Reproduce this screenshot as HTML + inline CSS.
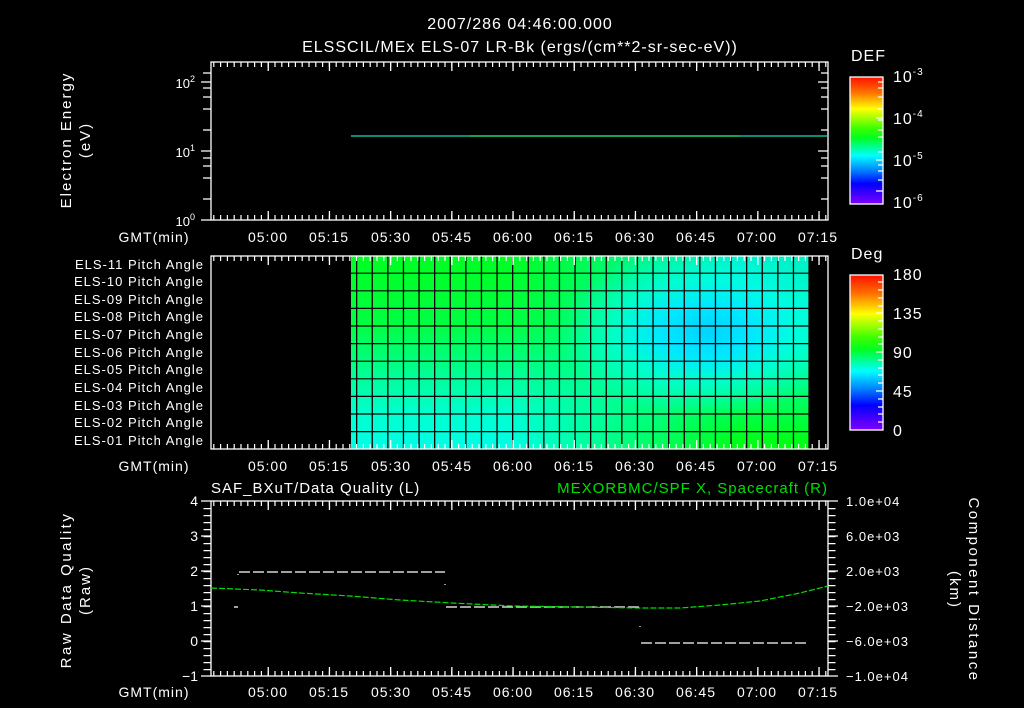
<!DOCTYPE html>
<html><head><meta charset="utf-8"><style>
html,body{margin:0;padding:0;background:#000;width:1024px;height:708px;overflow:hidden}
#hm{position:absolute;left:351px;top:256px;width:458px;height:193px;
background:linear-gradient(to bottom,#00ff22 0%,#00ff40 35%,#00ff90 60%,#00ffd0 82%,#00ffe6 100%)}
#hm2{position:absolute;left:351px;top:256px;width:458px;height:193px;
background:linear-gradient(to bottom,#00f0c8 0%,#00ffb0 40%,#00ff60 75%,#00ff08 100%);
-webkit-mask-image:linear-gradient(to right,transparent 0%,transparent 35%,#000 85%,#000 100%);
mask-image:linear-gradient(to right,transparent 0%,transparent 35%,#000 85%,#000 100%)}
#hm3{position:absolute;left:351px;top:256px;width:458px;height:193px;
background:radial-gradient(ellipse 150px 85px at 355px 75px,#00d4ff 0%,#00e8ff 30%,rgba(0,255,255,0.6) 60%,rgba(0,255,255,0) 100%)}
svg{position:absolute;left:0;top:0}
text{font-family:"Liberation Sans",sans-serif;fill:#fff}
</style></head><body>
<div id="hm"></div><div id="hm2"></div><div id="hm3"></div>
<svg width="1024" height="708" viewBox="0 0 1024 708">
<defs>
<linearGradient id="cb" x1="0" y1="0" x2="0" y2="1">
<stop offset="0" stop-color="#ff1000"/><stop offset="0.12" stop-color="#ff7000"/>
<stop offset="0.25" stop-color="#ffff00"/><stop offset="0.4" stop-color="#40ff00"/>
<stop offset="0.48" stop-color="#00ff20"/><stop offset="0.62" stop-color="#00ffff"/>
<stop offset="0.75" stop-color="#0070ff"/><stop offset="0.84" stop-color="#0000ff"/>
<stop offset="1" stop-color="#8000ff"/></linearGradient>
</defs>
<g font-size="16" text-anchor="middle" letter-spacing="1">
<text x="520" y="29">2007/286 04:46:00.000</text>
<text x="520" y="52">ELSSCIL/MEx ELS-07 LR-Bk  (ergs/(cm**2-sr-sec-eV))</text>
</g>

<line x1="356" y1="352" x2="809" y2="352" stroke="#000" stroke-width="193" stroke-dasharray="1.3 14.3"/>
<line x1="580" y1="272.6" x2="580" y2="449" stroke="#000" stroke-width="458" stroke-dasharray="1.2 16.4"/>

<g stroke="#fff" fill="none" stroke-width="1.3">
<rect x="211" y="62" width="617" height="158"/>
<rect x="211" y="256" width="617" height="193"/>
<rect x="211" y="501" width="617" height="175"/>
</g>
<g stroke="#fff">
<g stroke-dasharray="1.2 5.6" stroke-width="5">
<line x1="213.2" y1="64.5" x2="828" y2="64.5"/>
<line x1="213.2" y1="217.5" x2="828" y2="217.5"/>
<line x1="213.2" y1="258.5" x2="828" y2="258.5"/>
<line x1="213.2" y1="446.5" x2="828" y2="446.5"/>
<line x1="213.2" y1="503.5" x2="828" y2="503.5"/>
<line x1="213.2" y1="673.5" x2="828" y2="673.5"/>
</g>
<g stroke-dasharray="1.3 59.9" stroke-width="9">
<line x1="267.6" y1="66.5" x2="828" y2="66.5"/>
<line x1="267.6" y1="215.5" x2="828" y2="215.5"/>
<line x1="267.6" y1="260.5" x2="828" y2="260.5"/>
<line x1="267.6" y1="444.5" x2="828" y2="444.5"/>
<line x1="267.6" y1="505.5" x2="828" y2="505.5"/>
<line x1="267.6" y1="671.5" x2="828" y2="671.5"/>
</g>
</g>
<g stroke="#fff" stroke-width="1.3">
<path d="M201 82H211M201 151H211M201 220H211M203 130H211M203 109H211M203 97H211M203 88H211M203 199H211M203 178H211M203 166H211M203 158H211M203 73H211"/>
<path d="M818 82H828M818 151H828M821 130H828M821 109H828M821 97H828M821 88H828M821 199H828M821 178H828M821 166H828M821 158H828M821 73H828"/>
</g>
<text x="195" y="88" font-size="13" text-anchor="end">10<tspan font-size="9" dy="-6">2</tspan></text>
<text x="195" y="157" font-size="13" text-anchor="end">10<tspan font-size="9" dy="-6">1</tspan></text>
<text x="195" y="226" font-size="13" text-anchor="end">10<tspan font-size="9" dy="-6">0</tspan></text>
<text transform="translate(71,140) rotate(-90)" font-size="15" letter-spacing="2" text-anchor="middle">Electron Energy</text>
<text transform="translate(90,140) rotate(-90)" font-size="15" letter-spacing="2" text-anchor="middle">(eV)</text>
<line x1="351" y1="136" x2="828" y2="136" stroke="#10e0c0" stroke-width="1.3"/>
<line x1="470" y1="136" x2="740" y2="136" stroke="#20e060" stroke-width="1.3"/>

<g font-size="14" text-anchor="middle" letter-spacing="1">
<text x="268" y="242">05:00</text><text x="329" y="242">05:15</text><text x="391" y="242">05:30</text><text x="452" y="242">05:45</text><text x="513" y="242">06:00</text><text x="574" y="242">06:15</text><text x="635" y="242">06:30</text><text x="696" y="242">06:45</text><text x="757" y="242">07:00</text><text x="818" y="242">07:15</text>
<text x="268" y="471">05:00</text><text x="329" y="471">05:15</text><text x="391" y="471">05:30</text><text x="452" y="471">05:45</text><text x="513" y="471">06:00</text><text x="574" y="471">06:15</text><text x="635" y="471">06:30</text><text x="696" y="471">06:45</text><text x="757" y="471">07:00</text><text x="818" y="471">07:15</text>
<text x="268" y="697">05:00</text><text x="329" y="697">05:15</text><text x="391" y="697">05:30</text><text x="452" y="697">05:45</text><text x="513" y="697">06:00</text><text x="574" y="697">06:15</text><text x="635" y="697">06:30</text><text x="696" y="697">06:45</text><text x="757" y="697">07:00</text><text x="818" y="697">07:15</text>
<text x="154" y="242">GMT(min)</text><text x="154" y="471">GMT(min)</text><text x="154" y="697">GMT(min)</text>
</g>
<g font-size="13" text-anchor="end" letter-spacing="1">
<text x="204" y="269">ELS-11 Pitch Angle</text><text x="204" y="286">ELS-10 Pitch Angle</text><text x="204" y="304">ELS-09 Pitch Angle</text><text x="204" y="321">ELS-08 Pitch Angle</text><text x="204" y="339">ELS-07 Pitch Angle</text><text x="204" y="357">ELS-06 Pitch Angle</text><text x="204" y="374">ELS-05 Pitch Angle</text><text x="204" y="392">ELS-04 Pitch Angle</text><text x="204" y="410">ELS-03 Pitch Angle</text><text x="204" y="427">ELS-02 Pitch Angle</text><text x="204" y="445">ELS-01 Pitch Angle</text>
</g>
<rect x="850" y="77" width="33" height="127" fill="url(#cb)" stroke="#fff" stroke-width="1.3"/>
<rect x="850" y="275" width="33" height="155" fill="url(#cb)" stroke="#fff" stroke-width="1.3"/>
<g stroke="#fff" stroke-width="1.3">
<path d="M878 82H883M878 88H883M878 97H883M878 109H883M876 118H883M878 120H883M878 130H883M878 137H883M876 160H883M878 165H883M878 171H883M878 180H883M876 191H883M878 152H883"/>
<path d="M878 282H883M878 290H883M878 298H883M878 306H883M876 313H883M878 321H883M878 329H883M878 337H883M876 352H883M878 360H883M878 368H883M878 375H883M876 391H883M878 399H883M878 407H883M878 414H883M878 422H883M878 344H883M878 383H883"/>
</g>
<text x="851" y="61" font-size="16" letter-spacing="1">DEF</text>
<text x="851" y="259" font-size="16" letter-spacing="1">Deg</text>
<g font-size="16" letter-spacing="1">
<text x="893" y="82">10<tspan font-size="10" dy="-7">-3</tspan></text>
<text x="893" y="124">10<tspan font-size="10" dy="-7">-4</tspan></text>
<text x="893" y="166">10<tspan font-size="10" dy="-7">-5</tspan></text>
<text x="893" y="208">10<tspan font-size="10" dy="-7">-6</tspan></text>
<text x="893" y="280">180</text><text x="893" y="319">135</text><text x="893" y="358">90</text><text x="893" y="397">45</text><text x="893" y="436">0</text>
</g>

<text x="211" y="493" font-size="15" letter-spacing="1">SAF_BXuT/Data Quality (L)</text>
<text x="828" y="493" font-size="15" letter-spacing="1" text-anchor="end" style="fill:#00e000">MEXORBMC/SPF X, Spacecraft (R)</text>
<g stroke="#fff" stroke-width="1.3">
<line x1="207" y1="508" x2="207" y2="676" stroke-width="7" stroke-dasharray="1.2 5.8"/>
<line x1="832" y1="508" x2="832" y2="676" stroke-width="7" stroke-dasharray="1.2 5.8"/>
<path d="M201 501H211M201 536H211M201 571H211M201 606H211M201 641H211M201 676H211"/>
<path d="M828 501H838M828 536H838M828 571H838M828 606H838M828 641H838M828 676H838"/>
</g>
<g font-size="14" text-anchor="end">
<text x="198" y="506">4</text><text x="198" y="541">3</text><text x="198" y="576">2</text><text x="198" y="611">1</text><text x="198" y="646">0</text><text x="198" y="681">−1</text>
</g>
<g font-size="13" letter-spacing="1">
<text x="846" y="506">1.0e+04</text><text x="846" y="541">6.0e+03</text><text x="846" y="576">2.0e+03</text><text x="846" y="611">−2.0e+03</text><text x="846" y="646">−6.0e+03</text><text x="846" y="681">−1.0e+04</text>
</g>
<text transform="translate(71,590) rotate(-90)" font-size="15" letter-spacing="2.5" text-anchor="middle">Raw Data Quality</text>
<text transform="translate(90,590) rotate(-90)" font-size="15" letter-spacing="2" text-anchor="middle">(Raw)</text>
<text transform="translate(969,590) rotate(90)" font-size="15" letter-spacing="2.5" text-anchor="middle">Component Distance</text>
<text transform="translate(950,590) rotate(90)" font-size="15" letter-spacing="2" text-anchor="middle">(km)</text>
<g stroke="#fff" stroke-width="1.2">
<line x1="239" y1="572" x2="445" y2="572" stroke-dasharray="11 3"/>
<line x1="446" y1="607" x2="640" y2="607" stroke-dasharray="11 3"/>
<line x1="641" y1="643" x2="807" y2="643" stroke-dasharray="11 3"/>
<path d="M234 607H238M238 574V575M445 584V585M640 626V627"/>
</g>
<polyline fill="none" stroke="#00e000" stroke-width="1.2" stroke-dasharray="6 2" points="211,588 260,590 300,593 350,596 400,600 452,603 513,606 580,607 640,608 680,608 720,605 760,601 800,593 828,586"/>
</svg>
</body></html>
